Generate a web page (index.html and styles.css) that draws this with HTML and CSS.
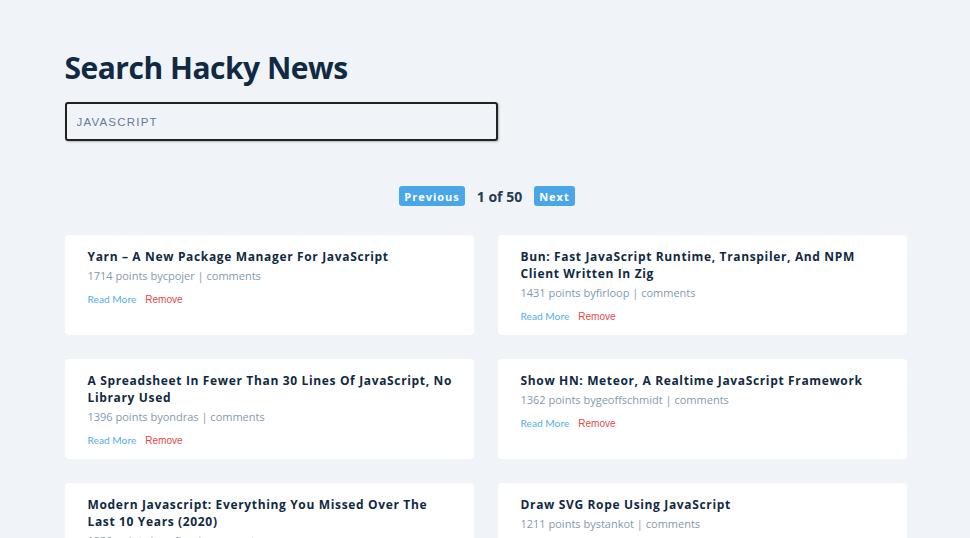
FILE: index.html
```html
<!DOCTYPE html>
<html lang="en">
<head>
<meta charset="utf-8">
<title>Search Hacky News</title>
<link rel="stylesheet" href="styles.css">
</head>
<body>
<main class="page">
  <form class="search-form">
    <h2 class="page-title">Search Hacky News</h2>
    <input class="search-input" type="text" value="JAVASCRIPT">
  </form>
  <div class="pagination">
    <button class="btn">Previous</button>
    <p class="page-count">1 of 50</p>
    <button class="btn">Next</button>
  </div>
  <section class="stories">
    <article class="story">
      <h4 class="story-title">Yarn – A New Package Manager For JavaScript</h4>
      <p class="story-info">1714 points by<span>cpojer</span> | comments</p>
      <div class="story-actions"><a class="read-link" href="#">Read More</a><button class="remove-btn">Remove</button></div>
    </article>
    <article class="story">
      <h4 class="story-title">Bun: Fast JavaScript Runtime, Transpiler, And NPM Client Written In Zig</h4>
      <p class="story-info">1431 points by<span>firloop</span> | comments</p>
      <div class="story-actions"><a class="read-link" href="#">Read More</a><button class="remove-btn">Remove</button></div>
    </article>
    <article class="story">
      <h4 class="story-title">A Spreadsheet In Fewer Than 30 Lines Of JavaScript, No Library Used</h4>
      <p class="story-info">1396 points by<span>ondras</span> | comments</p>
      <div class="story-actions"><a class="read-link" href="#">Read More</a><button class="remove-btn">Remove</button></div>
    </article>
    <article class="story">
      <h4 class="story-title">Show HN: Meteor, A Realtime JavaScript Framework</h4>
      <p class="story-info">1362 points by<span>geoffschmidt</span> | comments</p>
      <div class="story-actions"><a class="read-link" href="#">Read More</a><button class="remove-btn">Remove</button></div>
    </article>
    <article class="story">
      <h4 class="story-title">Modern Javascript: Everything You Missed Over The Last 10 Years (2020)</h4>
      <p class="story-info">1330 points by<span>sufian</span> | comments</p>
      <div class="story-actions"><a class="read-link" href="#">Read More</a><button class="remove-btn">Remove</button></div>
    </article>
    <article class="story">
      <h4 class="story-title">Draw SVG Rope Using JavaScript</h4>
      <p class="story-info">1211 points by<span>stankot</span> | comments</p>
      <div class="story-actions"><a class="read-link" href="#">Read More</a><button class="remove-btn">Remove</button></div>
    </article>
  </section>
</main>
</body>
</html>
```

FILE: styles.css
```css
* { box-sizing: border-box; }
html, body { margin: 0; padding: 0; }
body {
  background: #f0f4f8;
  font-family: "Open Sans", "Noto Sans", sans-serif;
  color: #102a43;
}
.page {
  width: 843px;
  margin: 0 auto;
  padding-top: 48px;
  padding-left: 1px;
}
.search-form { margin: 0; }
.page-title {
  margin: 0 0 14px;
  font-size: 30px;
  line-height: 40px;
  font-weight: 700;
  letter-spacing: -0.5px;
  color: #102a43;
}
.search-input {
  display: block;
  width: 433px;
  height: 39px;
  padding: 0 10px;
  border: 2px solid #222;
  border-radius: 3px;
  background: #f0f4f8;
  box-shadow: 1px 1px 2px rgba(0,0,0,0.25);
  font-family: "Liberation Sans", Arial, sans-serif;
  font-size: 11.5px;
  letter-spacing: 1.2px;
  color: #627d98;
}
.pagination {
  display: flex;
  justify-content: center;
  align-items: center;
  gap: 12px;
  margin-top: 44px;
  height: 22px;
  padding-left: 3px;
}
.btn {
  background: #49a6e9;
  color: #fff;
  border: none;
  border-radius: 3px;
  height: 20px;
  padding: 0 5px;
  font-family: "Open Sans", sans-serif;
  font-size: 11px;
  font-weight: 700;
  letter-spacing: 1px;
}
.page-count {
  margin: 0;
  font-size: 14px;
  font-weight: 700;
  color: #243b53;
}
.stories {
  display: grid;
  grid-template-columns: 1fr 1fr;
  column-gap: 24px;
  row-gap: 24px;
  margin-top: 28px;
}
.story {
  background: #fff;
  border-radius: 4px;
  padding: 13px 20px 11px 23px;
  min-height: 100px;
}
.story-title {
  margin: 0;
  font-size: 12px;
  line-height: 17px;
  font-weight: 700;
  letter-spacing: 0.65px;
  color: #102a43;
}
.story-info {
  margin: 1px 0 0;
  font-family: "Open Sans", sans-serif;
  font-size: 11px;
  line-height: 20px;
  color: #829ab1;
}
.story-actions {
  display: flex;
  align-items: center;
  gap: 9px;
  margin-top: 6px;
  height: 14px;
}
.read-link {
  font-family: Lato, sans-serif;
  font-size: 10.2px;
  color: #56adea;
  text-decoration: none;
}
.remove-btn {
  padding: 0;
  border: none;
  background: none;
  font-family: "Liberation Sans", Arial, sans-serif;
  font-size: 10px;
  color: #e04848;
}
```
